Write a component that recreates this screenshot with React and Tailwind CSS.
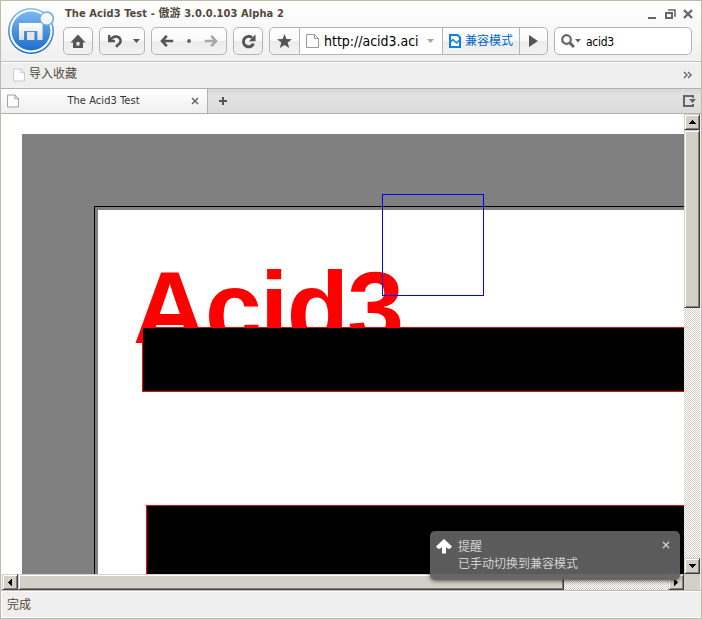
import React from "react";

const BTN =
  "h-7 box-border border border-[#b4b4b4] rounded-[5px] bg-[linear-gradient(#ffffff_0%,#fafafa_48%,#ececec_50%,#f2f2f2_100%)] flex items-center shrink-0";
const RAISED =
  "box-border bg-[#d4d0c8] border border-t-[#d4d0c8] border-l-[#d4d0c8] border-r-[#404040] border-b-[#404040] shadow-[inset_1px_1px_0_#ffffff,inset_-1px_-1px_0_#808080] flex items-center justify-center shrink-0";
const DITHER =
  "bg-[conic-gradient(#ffffff_25%,#d4d0c8_0_50%,#ffffff_0_75%,#d4d0c8_0)] bg-[size:2px_2px]";

function Logo() {
  return (
    <svg width="48" height="48" viewBox="0 0 48 48" className="block">
      <defs>
        <linearGradient id="disc" x1="0" y1="0" x2="0" y2="1">
          <stop offset="0" stopColor="#7db8ee" />
          <stop offset="1" stopColor="#1c6fcb" />
        </linearGradient>
        <linearGradient id="ring" x1="0" y1="0" x2="0" y2="1">
          <stop offset="0" stopColor="#84bdf2" />
          <stop offset="1" stopColor="#1f6fc6" />
        </linearGradient>
        <linearGradient id="mark" x1="0" y1="0" x2="0" y2="1">
          <stop offset="0" stopColor="#ffffff" />
          <stop offset="1" stopColor="#dedede" />
        </linearGradient>
      </defs>
      <circle cx="24" cy="24" r="23" fill="url(#ring)" />
      <circle cx="24" cy="24" r="21.4" fill="#fff" />
      <circle cx="24" cy="24" r="19.4" fill="url(#disc)" />
      <circle cx="40" cy="11.5" r="7.2" fill="#6fafea" />
      <circle cx="39.6" cy="11.7" r="5.9" fill="#f6f6f6" />
      <path d="M12 16H34L35.6 17.6V33H30.4V24H17V33H12Z" fill="url(#mark)" />
      <path d="M20 25H27.4V33H20Z" fill="#e6e6e6" />
    </svg>
  );
}

function Page({ className, w = 13, h = 14, stroke = "#999" }) {
  return (
    <svg width={w} height={h} viewBox="0 0 13 14" className={className}>
      <path d="M.5 .5H8.5L12.5 4.5V13.5H.5Z" fill="#fdfdfd" stroke={stroke} />
      <path d="M8.5 .5V4.5H12.5" fill="none" stroke={stroke} />
    </svg>
  );
}

function Arrow({ flip, color }) {
  return (
    <svg width="14" height="12" viewBox="0 0 14 12" className={flip ? "-scale-x-100" : ""}>
      <path d="M6.8 .8L2 6L6.8 11.2M2 6H13.2" fill="none" stroke={color} strokeWidth="2.6" />
    </svg>
  );
}

function Down({ color = "#555" }) {
  return (
    <svg width="7" height="4" viewBox="0 0 7 4" className="block shrink-0">
      <path d="M0 0H7L3.5 4Z" fill={color} />
    </svg>
  );
}

function Tri({ d, w, h }) {
  return (
    <svg width={w} height={h} viewBox={`0 0 ${w} ${h}`} shapeRendering="crispEdges">
      <path d={d} fill="#000" />
    </svg>
  );
}

function Header() {
  return (
    <header className="h-[60px] flex shrink-0 bg-[linear-gradient(#ffffff,#f0f0f0)] pl-[6px]">
      <div className="w-[56px] pt-[6px] shrink-0">
        <Logo />
      </div>
      <div className="flex-1 flex flex-col">
        <div className="h-[26px] flex items-center justify-between pl-[2px] pr-[8px]">
          <span className="font-bold text-[11px] tracking-[0.09px] text-[#51483a] whitespace-nowrap pt-px">
            The Acid3 Test - 傲游 3.0.0.103 Alpha 2
          </span>
          <svg width="46" height="12" viewBox="0 0 46 12" fill="none" stroke="#666">
            <path d="M1 10H9" strokeWidth="2" />
            <path d="M19 5H25V10H19Z" strokeWidth="2" />
            <path d="M21 2H28V8H27" strokeWidth="1.6" />
            <path d="M37 2L45 10M45 2L37 10" strokeWidth="2.4" />
          </svg>
        </div>
        <div className="flex items-center">
          <div className={`${BTN} w-[30px] justify-center`}>
            <svg width="16" height="14" viewBox="0 0 16 14">
              <path
                d="M8 .5L15.5 8.5H13V14H3V8.5H.5ZM6.5 8V11.5H9.5V8Z"
                fill="#555"
                fillRule="evenodd"
              />
            </svg>
          </div>
          <div className={`${BTN} w-[46px] ml-1.5 pl-[7px] gap-[11px]`}>
            <svg width="15" height="14" viewBox="0 0 15 14" fill="none" stroke="#555">
              <path d="M2.2 1V7H8" strokeWidth="2.4" />
              <path d="M2.8 6.4C5 3.4 7.5 2.2 10 2.6C13.6 3.3 14.4 7 12.6 9.4L9 12.8" strokeWidth="2.6" />
            </svg>
            <Down />
          </div>
          <div className={`${BTN} w-[76px] ml-1.5 pl-2 gap-[13px]`}>
            <Arrow color="#555" />
            <span className="w-[4px] h-[4px] rounded-full bg-[#666]" />
            <Arrow flip color="#a8a8a8" />
          </div>
          <div className={`${BTN} w-[30px] ml-1.5 justify-center`}>
            <svg width="15" height="15" viewBox="0 0 15 15">
              <path d="M11 3.6A5.2 5.2 0 1 0 12.4 9.6" fill="none" stroke="#555" strokeWidth="3" />
              <path d="M14.5 .5V7.2H7.8Z" fill="#555" />
            </svg>
          </div>
          <div className={`${BTN} w-[279px] ml-1.5 overflow-hidden`}>
            <div className="w-[29px] flex justify-center">
              <svg width="15" height="14" viewBox="0 0 15 14">
                <path d="M7.5 0L9.4 4.9L15 5.2L10.7 8.5L12.2 14L7.5 10.9L2.8 14L4.3 8.5L0 5.2L5.6 4.9Z" fill="#555" />
              </svg>
            </div>
            <div className="w-[144px] h-full bg-white border-x border-[#b4b4b4] flex items-center pl-[6px]">
              <Page />
              <span className="ml-[5px] w-[95px] overflow-hidden whitespace-nowrap text-[14px] leading-[20px] tracking-[-0.02px] text-black">
                http://acid3.acid
              </span>
              <span className="ml-[8px]">
                <Down color="#a9a699" />
              </span>
            </div>
            <div className="w-[77px] h-full border-r border-[#b4b4b4] flex items-center pl-[6px] gap-[4px]">
              <svg width="12" height="14" viewBox="0 0 12 14">
                <path d="M1 1H8.5L11 3.5V13H1Z" fill="#fff" stroke="#0a7fe6" strokeWidth="2" />
                <path d="M1.5 8L4 5.5L7.5 9L10.5 6" fill="none" stroke="#0a7fe6" strokeWidth="1.5" />
              </svg>
              <span className="text-[12px] leading-[14px] text-[#0066cc] whitespace-nowrap">兼容模式</span>
            </div>
            <div className="flex-1 flex justify-center">
              <svg width="9" height="12" viewBox="0 0 9 12">
                <path d="M0 0L9 6L0 12Z" fill="#555" />
              </svg>
            </div>
          </div>
          <div className="h-7 w-[138px] ml-1.5 box-border border border-[#b4b4b4] rounded-[5px] bg-white flex items-center pl-[6px]">
            <svg width="14" height="14" viewBox="0 0 14 14" fill="none" stroke="#666">
              <circle cx="5.5" cy="5.5" r="4.3" strokeWidth="2.2" />
              <path d="M8.5 8.5L13 13" strokeWidth="3" />
            </svg>
            <svg width="6" height="4" viewBox="0 0 6 4">
              <path d="M0 0H6L3 3.5Z" fill="#666" />
            </svg>
            <span className="ml-[5px] pt-px text-[12px] tracking-[-0.3px] text-black">acid3</span>
          </div>
        </div>
      </div>
    </header>
  );
}

function Tabs() {
  return (
    <div className="h-[26px] shrink-0 flex border-t border-b border-[#b0b0b0] bg-[linear-gradient(#d8d8d8,#e2e2e2_30%,#dcdcdc)]">
      <div className="w-[207px] box-border border-r border-[#b0b0b0] bg-[linear-gradient(#ffffff,#efefef)] flex items-center pl-[6px] pr-[8px]">
        <Page w={12} />
        <span className="flex-1 text-center text-[11px] tracking-[0.06px] text-[#333] whitespace-nowrap pr-[3px] pt-px">
          The Acid3 Test
        </span>
        <svg width="8" height="8" viewBox="0 0 8 8">
          <path d="M1 1L7 7M7 1L1 7" stroke="#666" strokeWidth="1.5" />
        </svg>
      </div>
      <div className="flex-1 flex items-center justify-between pl-[11px] pr-[5px]">
        <svg width="8" height="8" viewBox="0 0 8 8">
          <path d="M4 0V8M0 4H8" stroke="#555" strokeWidth="2" />
        </svg>
        <svg width="13" height="12" viewBox="0 0 13 12">
          <path d="M10 3V1H1V11H10V9" fill="none" stroke="#666" strokeWidth="2" />
          <path d="M6 4H13L9.5 8Z" fill="#666" />
        </svg>
      </div>
    </div>
  );
}

function Acid() {
  return (
    <main className="w-[683px] h-[460px] overflow-hidden relative bg-white pl-[21px] pt-[20px]">
      <div className="h-full bg-[#808080] pl-[72px] pt-[72px]">
        <div className="h-full border-l border-t border-black pl-[3px] pt-[3px]">
          <div className="h-full bg-white pl-[35px] pt-[48px]">
            <h1 className="font-['Liberation_Sans',sans-serif] font-bold text-[102px] leading-[101px] tracking-[-1.7px] text-[#ff0000] whitespace-nowrap">
              Acid3
            </h1>
          </div>
        </div>
      </div>
      <div className="absolute left-[141px] top-[213px] right-0 h-[65px] bg-black border border-r-0 border-[#ff0000]" />
      <div className="absolute left-[145px] top-[391px] right-0 h-[70px] bg-black border border-r-0 border-[#ff0000]" />
      <div className="absolute left-[381px] top-[80px] w-[102px] h-[102px] border border-[#0000ff]" />
    </main>
  );
}

function Toast() {
  return (
    <aside className="absolute left-[429px] top-[530px] w-[250px] h-[49px] rounded-[5px] bg-[#606060]/95 shadow-[0_1px_4px_rgba(0,0,0,0.6)] flex pl-[6px] pt-[8px] text-[12px] leading-[17px] text-[#d0d0d0]">
      <svg width="16" height="15" viewBox="0 0 16 15" className="shrink-0">
        <path d="M8 0L16 7.6L14 9.8H12L10 8V14.5H6V8L4 9.8H2L0 7.6Z" fill="#fff" />
      </svg>
      <div className="ml-[6px] flex-1 whitespace-nowrap">
        <div>提醒</div>
        <div>已手动切换到兼容模式</div>
      </div>
      <svg width="8" height="8" viewBox="0 0 8 8" className="mt-[2px] mr-[10px]">
        <path d="M1 1L7 7M7 1L1 7" stroke="#d0d0d0" strokeWidth="1.4" />
      </svg>
    </aside>
  );
}

export default function App() {
  return (
    <div className="relative w-[702px] h-[619px] box-border border border-[#bfbbab] bg-[#efefef] flex flex-col overflow-hidden font-['DejaVu_Sans_Condensed','Noto_Sans_CJK_SC',sans-serif]">
      <Header />
      <div className="h-[27px] shrink-0 box-border border-t border-[#c0c0c0] bg-[#efefef] shadow-[inset_0_1px_0_#fff] flex items-center justify-between pl-[12px] pr-[9px]">
        <div className="flex items-center gap-[4px] pb-[2px]">
          <Page w={12} stroke="#c4c4c4" className="mt-[2px]" />
          <span className="text-[12px] leading-[16px] text-[#51483a]">导入收藏</span>
        </div>
        <svg width="9" height="8" viewBox="0 0 9 8">
          <path d="M1 1L4 4L1 7M5 1L8 4L5 7" fill="none" stroke="#666" strokeWidth="1.4" />
        </svg>
      </div>
      <Tabs />
      <div className="flex shrink-0 h-[460px]">
        <Acid />
        <div className={`w-4 flex flex-col ${DITHER}`}>
          <div className={`${RAISED} h-4`}>
            <Tri w={7} h={4} d="M3 0h1v1h1v1h1v1h1v1H0V3h1V2h1V1h1z" />
          </div>
          <div className={`${RAISED} h-[178px]`} />
          <div className="flex-1" />
          <div className={`${RAISED} h-4`}>
            <Tri w={7} h={4} d="M0 0h7v1H6v1H5v1H4v1H3V3H2V2H1V1H0z" />
          </div>
        </div>
      </div>
      <div className="flex h-4 shrink-0 pl-px">
        <div className={`flex w-[682px] ${DITHER}`}>
          <div className={`${RAISED} w-4`}>
            <Tri w={4} h={7} d="M4 0v7H3V6H2V5H1V4H0V3h1V2h1V1h1V0z" />
          </div>
          <div className={`${RAISED} w-[546px]`} />
          <div className="flex-1" />
          <div className={`${RAISED} w-4`}>
            <Tri w={4} h={7} d="M0 0h1v1h1v1h1v1h1v1H3v1H2v1H1v1H0z" />
          </div>
        </div>
        <div className="w-4 bg-[#d4d0c8]" />
      </div>
      <footer className="flex-1 border-t border-[#c0bdb2] bg-[#efefef] shadow-[inset_0_1px_0_#fff,inset_0_-1px_0_#fff,inset_1px_0_0_#fff] flex items-center pl-[6px] text-[12px] text-[#51483a]">
        完成
      </footer>
      <Toast />
    </div>
  );
}
